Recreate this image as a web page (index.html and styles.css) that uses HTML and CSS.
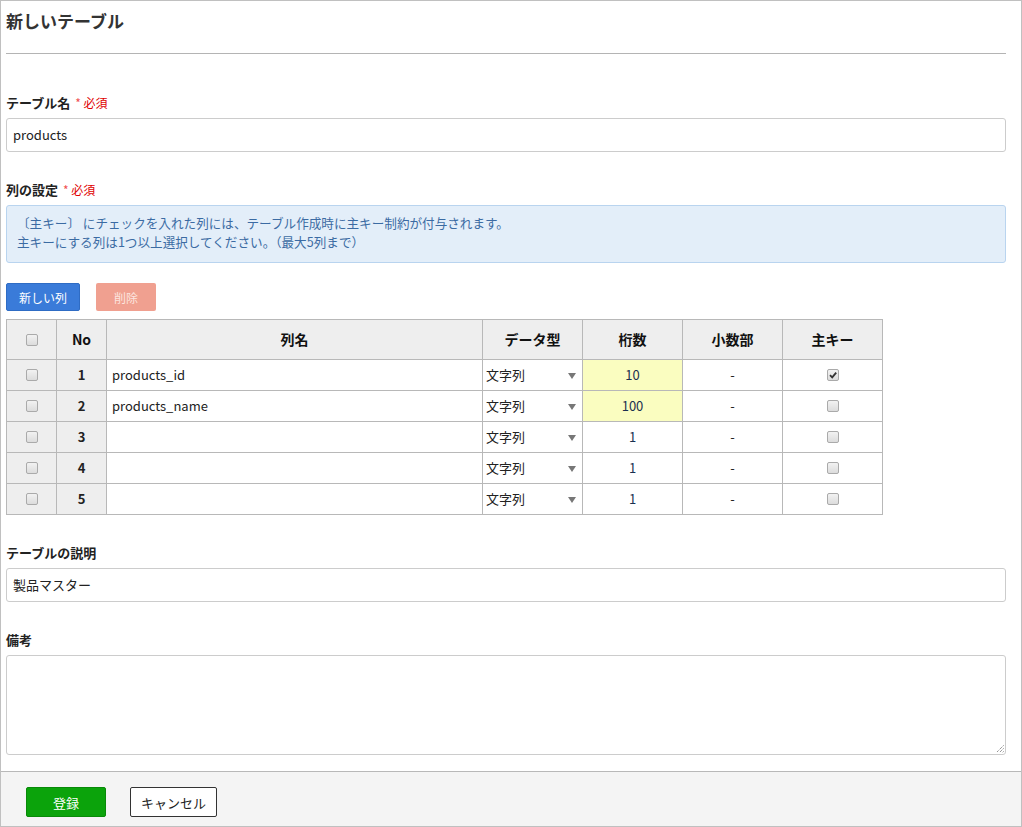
FILE: index.html
```html
<!DOCTYPE html>
<html lang="ja">
<head>
<meta charset="utf-8">
<link rel="stylesheet" href="styles.css">
</head>
<body>
<div class="frame">
  <div class="content">
    <h1 class="title">新しいテーブル</h1>
    <div class="rule"></div>

    <div class="label lbl-name">テーブル名 <span class="req"><span class="ast">*</span> 必須</span></div>
    <div class="input">products</div>

    <div class="label lbl-cols">列の設定 <span class="req"><span class="ast">*</span> 必須</span></div>
    <div class="info">
      <div>〔主キー〕 にチェックを入れた列には、テーブル作成時に主キー制約が付与されます。</div>
      <div>主キーにする列は1つ以上選択してください。（最大5列まで）</div>
    </div>

    <div class="btnrow">
      <span class="btn btn-blue">新しい列</span>
      <span class="btn btn-del">削除</span>
    </div>

    <table class="cols">
      <colgroup>
        <col class="c-chk"><col class="c-no"><col class="c-name"><col class="c-w"><col class="c-w"><col class="c-w"><col class="c-w">
      </colgroup>
      <thead>
        <tr>
          <th class="gray"><span class="cb"></span></th>
          <th>No</th>
          <th>列名</th>
          <th>データ型</th>
          <th>桁数</th>
          <th>小数部</th>
          <th>主キー</th>
        </tr>
      </thead>
      <tbody>
        <tr>
          <td class="gray center"><span class="cb"></span></td>
          <td class="gray center num">1</td>
          <td class="name">products_id</td>
          <td class="type"><div class="sel"><span>文字列</span><span class="arrow"></span></div></td>
          <td class="center digits yellow">10</td>
          <td class="center">-</td>
          <td class="center"><span class="cb checked"><svg viewBox="0 0 10 10" width="10" height="10"><path d="M2 5.2 L4.2 7.4 L8.2 2.6" fill="none" stroke="#333" stroke-width="1.8"/></svg></span></td>
        </tr>
        <tr>
          <td class="gray center"><span class="cb"></span></td>
          <td class="gray center num">2</td>
          <td class="name">products_name</td>
          <td class="type"><div class="sel"><span>文字列</span><span class="arrow"></span></div></td>
          <td class="center digits yellow">100</td>
          <td class="center">-</td>
          <td class="center"><span class="cb"></span></td>
        </tr>
        <tr>
          <td class="gray center"><span class="cb"></span></td>
          <td class="gray center num">3</td>
          <td class="name"></td>
          <td class="type"><div class="sel"><span>文字列</span><span class="arrow"></span></div></td>
          <td class="center digits">1</td>
          <td class="center">-</td>
          <td class="center"><span class="cb"></span></td>
        </tr>
        <tr>
          <td class="gray center"><span class="cb"></span></td>
          <td class="gray center num">4</td>
          <td class="name"></td>
          <td class="type"><div class="sel"><span>文字列</span><span class="arrow"></span></div></td>
          <td class="center digits">1</td>
          <td class="center">-</td>
          <td class="center"><span class="cb"></span></td>
        </tr>
        <tr>
          <td class="gray center"><span class="cb"></span></td>
          <td class="gray center num">5</td>
          <td class="name"></td>
          <td class="type"><div class="sel"><span>文字列</span><span class="arrow"></span></div></td>
          <td class="center digits">1</td>
          <td class="center">-</td>
          <td class="center"><span class="cb"></span></td>
        </tr>
      </tbody>
    </table>

    <div class="label lbl-desc">テーブルの説明</div>
    <div class="input">製品マスター</div>

    <div class="label lbl-note">備考</div>
    <div class="textarea"><svg class="grip" viewBox="0 0 9 9" width="9" height="9"><path d="M8.5 1.5 L1.5 8.5 M8.5 4.5 L4.5 8.5 M8.5 7.5 L7.5 8.5" stroke="#666" stroke-width="1" stroke-dasharray="1 1"/></svg></div>
  </div>

  <div class="footer">
    <span class="fbtn fbtn-green">登録</span>
    <span class="fbtn fbtn-white">キャンセル</span>
  </div>
</div>
</body>
</html>
```

FILE: styles.css
```css
html, body {
  margin: 0;
  padding: 0;
  background: #fff;
}
body {
  font-family: "Noto Sans CJK JP", "Noto Sans", sans-serif;
  font-size: 13px;
  color: #222;
}
.frame {
  width: 1022px;
  height: 827px;
  box-sizing: border-box;
  border: 1px solid #c0c0c0;
  display: flex;
  flex-direction: column;
}
.content {
  flex: 1;
  padding: 0 15px 0 5px;
}
.title {
  margin: 0;
  padding-top: 8px;
  height: 52px;
  box-sizing: border-box;
  font-size: 17px;
  font-weight: bold;
  line-height: 24px;
  color: #333;
}
.rule {
  height: 1px;
  background: #b4b4b4;
}
.label {
  font-weight: bold;
  font-size: 13px;
  line-height: 18px;
  height: 18px;
  color: #222;
}
.req {
  color: #e00000;
  font-weight: normal;
  font-size: 12px;
  margin-left: 2px;
}
.ast {
  color: #f05050;
}
.lbl-name { margin-top: 40px; margin-bottom: 6px; }
.lbl-cols { margin-top: 29px; margin-bottom: 6px; }
.lbl-desc { margin-top: 29px; margin-bottom: 6px; }
.lbl-note { margin-top: 29px; margin-bottom: 6px; }
.input {
  height: 34px;
  box-sizing: border-box;
  border: 1px solid #cccccc;
  border-radius: 3px;
  padding: 0 6px;
  line-height: 32px;
  font-size: 13px;
  color: #222;
}
.info {
  height: 58px;
  box-sizing: border-box;
  border: 1px solid #b9d4ef;
  border-radius: 3px;
  background: #e3eef9;
  color: #3b6ba3;
  padding: 7px 10px 0 10px;
  line-height: 19px;
  font-size: 12.6px;
}
.btnrow {
  display: flex;
  gap: 16px;
  margin-top: 20px;
  height: 28px;
}
.btn {
  display: flex;
  align-items: center;
  justify-content: center;
  height: 28px;
  box-sizing: border-box;
  border-radius: 2px;
  color: #fff;
  font-size: 12px;
}
.btn-blue {
  width: 74px;
  background: #3a7bd9;
  border: 1px solid #2f6cc4;
}
.btn-del {
  width: 60px;
  background: #f0a090;
  color: #fce5df;
}
table.cols {
  margin-top: 8px;
  border-collapse: collapse;
  table-layout: fixed;
  width: 877px;
}
col.c-chk { width: 50px; }
col.c-no { width: 50px; }
col.c-name { width: 376px; }
col.c-w { width: 100px; }
.cols th, .cols td {
  border: 1px solid #b8b8b8;
  padding: 0 0 2px 0;
  box-sizing: border-box;
}
.cols th {
  height: 40px;
  background: #eeeeee;
  font-size: 14px;
  font-weight: bold;
  text-align: center;
  color: #111;
}
.cols td {
  height: 31px;
  font-size: 13px;
}
.cols td.gray { background: #eeeeee; }
.center { text-align: center; }
.num { font-weight: bold; }
.name { padding-left: 5px !important; }
.digits { color: #1a3050; }
.yellow { background: #fafdc0; }
.sel {
  display: flex;
  align-items: center;
  justify-content: space-between;
  padding: 0 6px 0 3px;
}
.arrow {
  width: 0;
  height: 0;
  border-left: 4px solid transparent;
  border-right: 4px solid transparent;
  border-top: 6px solid #777;
  margin-top: 3px;
}
.cb {
  display: inline-flex;
  align-items: center;
  justify-content: center;
  width: 12px;
  height: 12px;
  box-sizing: border-box;
  border: 1px solid #aaa;
  border-radius: 2px;
  background: linear-gradient(#f2f2f2, #dcdcdc);
  vertical-align: middle;
  position: relative;
  top: -1px;
}
.cb svg { display: block; }
.textarea {
  height: 100px;
  box-sizing: border-box;
  border: 1px solid #cccccc;
  border-radius: 3px;
  position: relative;
}
.grip {
  position: absolute;
  right: 1px;
  bottom: 1px;
}
.footer {
  border-top: 1px solid #b8b8b8;
  background: #f4f4f4;
  display: flex;
  align-items: flex-start;
  gap: 24px;
  padding: 15px 0 0 25px;
  box-sizing: border-box;
  height: 55px;
}
.fbtn {
  display: flex;
  align-items: center;
  justify-content: center;
  height: 30px;
  box-sizing: border-box;
  border-radius: 2px;
  font-size: 13px;
}
.fbtn-green {
  width: 80px;
  background: #0ba30b;
  border: 1px solid #088a08;
  color: #fff;
}
.fbtn-white {
  width: 87px;
  background: #fff;
  border: 1px solid #333;
  color: #222;
}
```
